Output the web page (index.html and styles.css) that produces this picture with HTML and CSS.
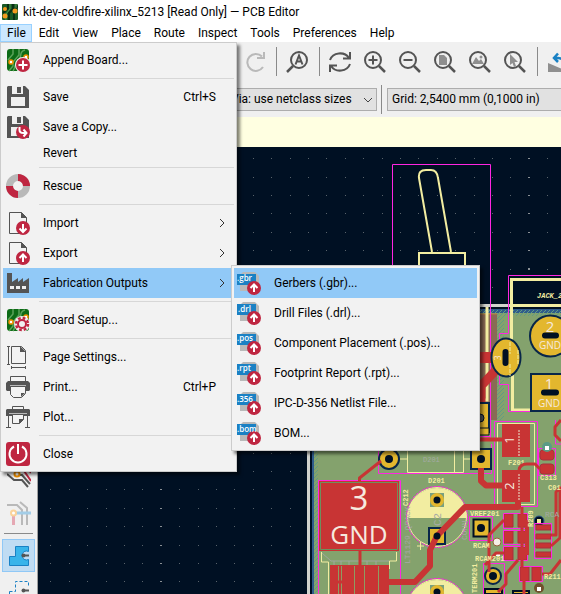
FILE: index.html
```html
<!DOCTYPE html>
<html lang="en">
<head>
<meta charset="utf-8">
<title>kit-dev-coldfire-xilinx_5213 [Read Only] — PCB Editor</title>
<link rel="stylesheet" href="styles.css">
</head>
<body>
<svg class="defs" aria-hidden="true">
  <defs>
    <symbol id="board" viewBox="0 0 24 24">
      <rect x="1" y="1" width="22" height="22" rx="3" fill="#0d6b16"/>
      <path d="M7 1v5L2 12M13 1v6l-6 7v4l-4 5M19 2c-7 2-2 7-7 11-4 3-2 6-5 10" fill="none" stroke="#5ba35b" stroke-width="1.5"/>
      <circle cx="5" cy="14" r="2" fill="#fff" stroke="#f29100" stroke-width="1.5"/>
      <circle cx="20" cy="9" r="2" fill="#fff" stroke="#f29100" stroke-width="1.5"/>
    </symbol>
    <symbol id="floppy" viewBox="0 0 24 24">
      <path d="M2 1h17l4 4v18H1V2z" fill="#545454"/>
      <path d="M6 1h11v8H6z" fill="#f0f0f0"/><path d="M11 2h4v6h-4z" fill="#545454"/><path d="M5 12h14v9H5z" fill="#f0f0f0"/>
    </symbol>
    <symbol id="sheet" viewBox="0 0 24 24">
      <path d="M3.500 1.500h12l5 5v16h-17z" fill="#f3f3f3" stroke="#545454"/><path d="M15 1l6 6h-6z" fill="#545454"/>
    </symbol>
    <symbol id="up" viewBox="0 0 14 14">
      <circle cx="7" cy="7" r="7" fill="#bf2641"/><path d="M7 11V4M3.500 7L7 3.500 10.500 7" fill="none" stroke="#fff" stroke-width="2"/>
    </symbol>
    <symbol id="tab" viewBox="0 0 24 24">
      <path d="M6 1h12l4 4v15H3V4z" fill="#b9b9b9"/><rect y="3" width="19" height="11" fill="#1a81c4"/>
      <use href="#up" x="10" y="10" width="14" height="14"/>
    </symbol>
    <symbol id="lens" viewBox="0 0 22 22">
      <circle cx="9" cy="9" r="8" fill="none" stroke="#545454" stroke-width="2"/><path d="M15 15l6 6" stroke="#545454" stroke-width="2.500"/>
    </symbol>
    <symbol id="chev" viewBox="0 0 6 10"><path d="M1 1l4 4-4 4" fill="none" stroke="#333"/></symbol>
    <g id="dotrow" fill="#59636b"><path d="M0 0h1v1H0zM18 0h1v1h-1zM36 0h1v1h-1zM55 0h1v1h-1zM73 0h1v1h-1z"/></g>
    <pattern id="grid" x="14" y="158" width="92" height="92" patternUnits="userSpaceOnUse">
      <use href="#dotrow"/><use href="#dotrow" y="19"/><use href="#dotrow" y="37"/><use href="#dotrow" y="55"/><use href="#dotrow" y="74"/>
    </pattern>
    <pattern id="hatch" width="4" height="4" patternUnits="userSpaceOnUse"><path d="M0 4l4-4" stroke="#629b82"/></pattern>
  </defs>
</svg>

<div class="app">
  <header class="titlebar">
    <svg class="logo" viewBox="0 0 16 16" aria-hidden="true"><rect width="16" height="16" rx="1" fill="#1b5a26"/><path d="M6 0v4L1 9M11 0v5L7 9v7M16 2l-4 4v10" fill="none" stroke="#0a2f14" stroke-width="2"/><path d="M8 0v5l-4 5v6M14 0v4" fill="none" stroke="#4f9a4d"/><circle cx="3" cy="5" r="2" fill="#f39a1e"/><circle cx="3" cy="12" r="2.500" fill="#f39a1e"/><circle cx="13" cy="7" r="2.500" fill="#f39a1e"/></svg>
    <h1 class="title">kit-dev-coldfire-xilinx_5213 [Read Only] — PCB Editor</h1>
  </header>

  <nav class="menubar">
    <div class="menu-root">
      <button class="menu-title open">File</button>
      <div class="menu" role="menu">
        <button class="item"><svg class="icon" viewBox="0 0 24 24"><use href="#board"/><circle cx="17" cy="17" r="8" fill="#f0f0f0"/><circle cx="17" cy="17" r="7" fill="#bf2641"/><path d="M17 12.500v9M12.500 17h9" stroke="#fff" stroke-width="2"/></svg><span>Append Board...</span></button>
        <hr>
        <button class="item"><svg class="icon"><use href="#floppy"/></svg><span>Save</span><span class="key">Ctrl+S</span></button>
        <button class="item"><svg class="icon" viewBox="0 0 24 24"><use href="#floppy"/><circle cx="17" cy="17" r="7" fill="#bf2641"/><path d="M13.500 12v3q0 3 4 3h3M17.500 14.500l3 3.500-3 3.500" fill="none" stroke="#fff" stroke-width="2"/></svg><span>Save a Copy...</span></button>
        <button class="item plain"><span class="icon"></span><span>Revert</span></button>
        <hr>
        <button class="item"><svg class="icon" viewBox="0 0 24 24"><circle cx="12" cy="12" r="8.500" fill="none" stroke="#b9b9b9" stroke-width="7"/><path d="M12 3.500A8.500 8.500 0 0 1 20.500 12M12 20.500A8.500 8.500 0 0 1 3.500 12" fill="none" stroke="#bf2641" stroke-width="7"/></svg><span>Rescue</span></button>
        <hr>
        <button class="item"><svg class="icon" viewBox="0 0 24 24"><use href="#sheet"/><circle cx="17" cy="17" r="7" fill="#bf2641"/><path d="M17 13v8M13.500 17.500L17 21l3.500-3.500" fill="none" stroke="#fff" stroke-width="2"/></svg><span>Import</span><svg class="arrow"><use href="#chev"/></svg></button>
        <button class="item"><svg class="icon" viewBox="0 0 24 24"><use href="#sheet"/><use href="#up" x="10" y="10" width="14" height="14"/></svg><span>Export</span><svg class="arrow"><use href="#chev"/></svg></button>
        <div class="sub-root">
          <button class="item active"><svg class="icon" viewBox="0 0 24 24"><path d="M1 2h5v9l6-4v4l5-4v4l6-4v15H1z" fill="#545454"/><path d="M4 15h4v3H4zM10 15h4v3h-4zM16 15h4v3h-4z" fill="#f0f0f0"/></svg><span>Fabrication Outputs</span><svg class="arrow"><use href="#chev"/></svg></button>
          <div class="menu submenu" role="menu">
            <button class="item active"><svg class="icon" viewBox="0 0 24 24"><use href="#tab"/><text class="ext" x="0" y="10">.gbr</text></svg><span>Gerbers (.gbr)...</span></button>
            <button class="item"><svg class="icon" viewBox="0 0 24 24"><use href="#tab"/><text class="ext" x="1" y="11">.drl</text></svg><span>Drill Files (.drl)...</span></button>
            <button class="item"><svg class="icon" viewBox="0 0 24 24"><use href="#tab"/><text class="ext" x="0" y="10">.pos</text></svg><span>Component Placement (.pos)...</span></button>
            <button class="item"><svg class="icon" viewBox="0 0 24 24"><use href="#tab"/><text class="ext" x="0" y="10">.rpt</text></svg><span>Footprint Report (.rpt)...</span></button>
            <button class="item"><svg class="icon" viewBox="0 0 24 24"><use href="#tab"/><text class="ext" x="0" y="11">.356</text></svg><span>IPC-D-356 Netlist File...</span></button>
            <button class="item"><svg class="icon" viewBox="0 0 24 24"><use href="#tab"/><text class="ext" x="0" y="11">.bom</text></svg><span>BOM...</span></button>
          </div>
        </div>
        <hr>
        <button class="item"><svg class="icon" viewBox="0 0 24 24"><use href="#board"/><circle cx="16" cy="16" r="8" fill="#f0f0f0"/><circle cx="16" cy="16" r="6" fill="none" stroke="#bf2641" stroke-width="2.500" stroke-dasharray="2.700 2"/><circle cx="16" cy="16" r="4" fill="none" stroke="#bf2641" stroke-width="2"/></svg><span>Board Setup...</span></button>
        <hr>
        <button class="item"><svg class="icon" viewBox="0 0 24 24"><path d="M5.500 1.500h10l4 4v13h-14zM1 1.500h3M2.500 1v18M1 19.500h3M5 22.500h15M5.500 21v3M19.500 21v3" fill="none" stroke="#545454"/><path d="M14 1l6 6h-6z" fill="#545454"/></svg><span>Page Settings...</span></button>
        <button class="item"><svg class="icon" viewBox="0 0 24 24"><path d="M4.500 1.500h15v6h-15z" fill="#f3f3f3" stroke="#545454"/><path d="M2 6h20l2 2v7l-1 1H1l-1-1V8z" fill="#545454"/><path d="M4 10.500h16" stroke="#b9b9b9"/><path d="M4.500 11.500h15v7l-4 4h-8l-3-3z" fill="#f3f3f3" stroke="#545454"/><path d="M15 22v-4h4z" fill="#545454"/></svg><span>Print...</span><span class="key">Ctrl+P</span></button>
        <button class="item"><svg class="icon" viewBox="0 0 24 24"><path d="M6.500 1.500h11v5h-11z" fill="#f3f3f3" stroke="#545454"/><path d="M1 4h22l1 1v6H0V5z" fill="#545454"/><path d="M3 8.500h18" stroke="#b9b9b9"/><path d="M2.500 10v12M21.500 10v12M0 22.500h5M19 22.500h5" stroke="#545454"/><path d="M6.500 9.500h11v5l-4 4h-7z" fill="#f3f3f3" stroke="#545454"/><path d="M13 19v-5h5z" fill="#545454"/></svg><span>Plot...</span></button>
        <hr>
        <button class="item"><svg class="icon" viewBox="0 0 24 24"><rect width="24" height="24" rx="3" fill="#bf2641"/><path d="M8 4.500a8.500 8.500 0 1 0 8 0M12 2v10" fill="none" stroke="#fff" stroke-width="2"/></svg><span>Close</span></button>
      </div>
    </div>
    <button class="menu-title">Edit</button>
    <button class="menu-title">View</button>
    <button class="menu-title">Place</button>
    <button class="menu-title">Route</button>
    <button class="menu-title">Inspect</button>
    <button class="menu-title">Tools</button>
    <button class="menu-title">Preferences</button>
    <button class="menu-title">Help</button>
  </nav>

  <div class="toolbar" role="toolbar">
    <button class="tool" aria-label="Redo"><svg viewBox="0 0 22 22"><path d="M19 5.500A8.500 8.500 0 1 0 20 16M21 1v6h-7" fill="none" stroke="#b9b9b9" stroke-width="2"/></svg></button>
    <span class="sep"></span>
    <button class="tool" aria-label="Find"><svg viewBox="0 0 22 22"><circle cx="13" cy="9" r="8" fill="none" stroke="#545454" stroke-width="2"/><path d="M7 15l-6 6" stroke="#545454" stroke-width="2.500"/><path d="M9.500 13.500l3.500-9 3.500 9M10.500 10.500h5" fill="none" stroke="#545454" stroke-width="2"/></svg></button>
    <span class="sep"></span>
    <button class="tool" aria-label="Refresh"><svg viewBox="0 0 22 22"><path d="M1 9a10.500 9.500 0 0 1 19-2M21 1v6.500h-7M21 13a10.500 9.500 0 0 1-19 2M1 21v-6.500h7" fill="none" stroke="#545454" stroke-width="2"/></svg></button>
    <button class="tool" aria-label="Zoom in"><svg viewBox="0 0 22 22"><use href="#lens"/><path d="M9 4.500v9M4.500 9h9" stroke="#545454" stroke-width="2"/></svg></button>
    <button class="tool" aria-label="Zoom out"><svg viewBox="0 0 22 22"><use href="#lens"/><path d="M4.500 9h9" stroke="#545454" stroke-width="2"/></svg></button>
    <button class="tool" aria-label="Zoom to page"><svg viewBox="0 0 22 22"><use href="#lens"/><path d="M5 4h5l3 3v7H5z" fill="#8f8f8f"/></svg></button>
    <button class="tool" aria-label="Zoom to objects"><svg viewBox="0 0 22 22"><use href="#lens"/><path d="M3 13l4-7 3 4 2-2 3 5z" fill="#8f8f8f"/><circle cx="12" cy="6" r="1.500" fill="#8f8f8f"/></svg></button>
    <button class="tool" aria-label="Zoom to selection"><svg viewBox="0 0 22 22"><use href="#lens"/><path d="M6 3v11l2.500-2 1.500 4 2-1-1.500-4H14z" fill="#8f8f8f"/></svg></button>
    <span class="sep"></span>
    <button class="tool" aria-label="Rotate"><svg viewBox="0 0 22 22"><path d="M1 12v9h21z" fill="#8f8f8f"/><path d="M7 7h4q6 0 7 7M11 2.500L7 7l4 4" fill="none" stroke="#1a81c4" stroke-width="2.500"/></svg></button>
  </div>

  <div class="options">
    <label class="combo via"><select aria-label="Via size"><option>Via: use netclass sizes</option></select><svg class="down" viewBox="0 0 10 6" aria-hidden="true"><path d="M1 1l4 4 4-4" fill="none" stroke="#444"/></svg></label>
    <span class="sep"></span>
    <label class="combo grid"><select aria-label="Grid"><option>Grid: 2,5400 mm (0,1000 in)</option></select></label>
  </div>

  <div class="infobar"></div>

  <main class="work">
    <aside class="side">
      <button class="side-tool" aria-label="Route differential pair"><svg viewBox="0 0 24 24"><path d="M0 8l7 6h8l6 7" fill="none" stroke="#545454" stroke-width="2"/><path d="M0 2h6l5 5M15 2l9 13M19 0l5 7" fill="none" stroke="#bf2641" stroke-width="2"/><path d="M11 9h4l8 9" fill="none" stroke="#545454" stroke-width="2"/><circle cx="10" cy="8" r="2.500" fill="#fff" stroke="#f29100" stroke-width="2"/></svg></button>
      <button class="side-tool" aria-label="Tracks"><svg viewBox="0 0 24 24"><path d="M0 4h10l5 5v15M13 1l7 6v17" fill="none" stroke="#b9b9b9" stroke-width="2"/><path d="M7 12h17" stroke="#a3cde7" stroke-width="3"/><path d="M6.500 14v10" stroke="#e5a8b3" stroke-width="3"/><circle cx="6.500" cy="12" r="2.500" fill="#fff" stroke="#fad39a" stroke-width="2"/></svg></button>
      <span class="rule"></span>
      <button class="side-tool on" aria-label="Filled zones"><svg viewBox="0 0 24 24"><path d="M2.500 12.500h6v-10h13v5a4.500 4.500 0 1 0 0 8v6h-19z" fill="#39b4ea" stroke="#1a81c4"/><circle cx="16.500" cy="11.500" r="2" fill="#545454"/><path d="M16 11.500h6" stroke="#545454" stroke-width="2"/></svg></button>
      <button class="side-tool" aria-label="Outlined zones"><svg viewBox="0 0 24 24"><path d="M2.500 12.500h6v-10h13v6M2.500 12.500v9h19v-6" fill="none" stroke="#1a81c4" stroke-dasharray="3 2"/><circle cx="16.500" cy="11.500" r="2" fill="#545454"/><path d="M16 11.500h6" stroke="#545454" stroke-width="2"/></svg></button>
    </aside>
    <svg class="canvas" viewBox="38 147 523 447" preserveAspectRatio="xMinYMin slice">
      <rect x="38" y="147" width="523" height="447" fill="#001023"/>
      <rect x="38" y="147" width="523" height="447" fill="url(#grid)"/>
      <path d="M160 489h2v1h-2zM160 508h2v1h-2zM160 526h2v1h-2zM160 545h2v1h-2zM160 563h2v1h-2zM160 581h2v1h-2zM528 158h2v1h-2zM528 177h2v1h-2zM528 195h2v1h-2zM528 213h2v1h-2zM528 232h2v1h-2zM528 250h2v1h-2zM528 268h2v2h-2z" fill="#8a9095"/>

      <!-- board outline and copper pours -->
      <path d="M307 304h254v3H310v287h-3z" fill="#d0d2cd"/>
      <path d="M312 309h249v285H312z" fill="#2f5b8b"/>
      <path d="M314 313h247v281H314z" fill="#84a26d"/>
      <path d="M314 313h4v281h-4zM480 310h81v6h-81zM497 310h7v110h-7z" fill="url(#hatch)"/>
      <path d="M480 314h17v106h-17z" fill="#8a6a55"/>
      <path d="M480 314h17" stroke="#c07a3a"/>

      <!-- switch lever -->
      <g fill="none" stroke="#f2eda1" stroke-width="2">
        <path d="M432 252L419 178q-1-8 7-8h5q6 0 7 8l13 74M419 268v-15h46v15"/>
        <path d="M487 307v93h-7" stroke-width="3"/>
      </g>
      <path d="M392.500 268V164.500h98V440" fill="none" stroke="#ff26e2"/>

      <!-- jack -->
      <path d="M508 276h53v28h-53z" fill="#001023"/>
      <path d="M511.500 340V279.500H561M511 305.500h50M512.500 375v35H531" fill="none" stroke="#f2eda1" stroke-width="3"/>
      <path d="M561 275.500h-52.500v58h-9v51h9v27H531" fill="none" stroke="#ff26e2"/>
      <text class="silk" x="537" y="298" font-size="7" font-style="italic">JACK_2P</text>
      <g fill="none" stroke="#c83434">
        <path d="M480 357.500h14" stroke-width="11"/><path d="M497 369l-16 17v18" stroke-width="9"/>
      </g>
      <g fill="#e3b72e" stroke="#082649" stroke-width="2">
        <ellipse cx="506" cy="357.500" rx="14.500" ry="19"/><circle cx="550.500" cy="336" r="20.500"/><path d="M531 374h31v37h-31zM472 403h17v29h-17z"/>
      </g>
      <g stroke="#001023" stroke-width="6" stroke-linecap="round"><path d="M505.500 352v11M545 335.500h11M544 392.500h12"/></g>
      <g class="pad"><text x="550" y="332" font-size="15">2</text><text x="550" y="349" font-size="10">GND</text><text x="549" y="389" font-size="15">1</text><text x="549" y="407" font-size="10">GND</text></g>
      <text class="pad" font-size="9" transform="translate(501 358) rotate(-90)">3</text>
      <path d="M510 342v12M510 364v12M518 350v14" stroke="#f2eda1" stroke-dasharray="4 1"/>
      <circle cx="480" cy="418" r="4" fill="#54595e" stroke="#001023"/>

      <!-- fuse F201 -->
      <path d="M497.500 423.500h37v81h-37z" fill="none" stroke="#f2eda1"/>
      <path d="M494.500 421.500h43v85h-43zM478 436.500h13" fill="none" stroke="#ff26e2"/>
      <path d="M502 424h28v33h-28zM502 470h28v32h-28z" fill="#c83434"/>
      <path d="M480 439.500h24" stroke="#c83434" stroke-width="4"/>
      <path d="M519 430v26M519 474v26" stroke="#da8f83" stroke-width="2" stroke-dasharray="2 1"/>
      <g class="pad"><text font-size="13" transform="translate(514 440) rotate(-90)">1</text><text font-size="13" transform="translate(514 486) rotate(-90)">2</text></g>
      <text class="silk" x="508" y="465" font-size="7">F201</text>
      <path d="M472 428h17v7h-17z" fill="#e3b72e" stroke="#001023"/>

      <!-- diode D201 -->
      <path d="M400 459h7M463 459h9M407.500 451v21.500h56V451M454.500 451v21" fill="none" stroke="#f2eda1"/>
      <path d="M378.500 446v27.500h113V444" fill="none" stroke="#ff26e2"/>
      <circle cx="389" cy="459" r="10" fill="#e3b72e" stroke="#082649" stroke-width="2"/>
      <path d="M471 449h20v20h-20z" fill="#e3b72e" stroke="#082649" stroke-width="2"/>
      <circle cx="389" cy="459" r="4" fill="#001023"/><circle cx="481" cy="459" r="4" fill="#001023"/>
      <text class="fab" x="423" y="462" font-size="7">D201</text>
      <text class="silk" x="428" y="483" font-size="7">D201</text>

      <!-- connector pad 3 -->
      <path d="M319 481h80v70h-80z" fill="#c83434"/>
      <path d="M320.500 482.500h77v67h-77z" fill="none" stroke="#6e8f5e"/>
      <path d="M318.500 594V480.500h82V594" fill="none" stroke="#ff26e2"/>
      <path d="M321.500 552v10l7 0v32M396.500 552v9h-7v8" fill="none" stroke="#f2eda1"/>
      <path d="M322 553l9 8h58M334 561v4M341 561v4M349 561v4M367 561v4M376 561v4" fill="none" stroke="#a0a79e"/>
      <path d="M330 565h59v29h-59z" fill="#c83434"/>
      <path d="M338.500 566v28M341.500 566v28M354.500 566v28M364.500 566v28M378.500 566v28" stroke="#8e9b61"/>
      <path d="M336 582h10" stroke="#c83434" stroke-width="3"/>
      <g class="pad"><text x="359" y="510" font-size="33">3</text><text x="359" y="544" font-size="26">GND</text></g>

      <!-- capacitors -->
      <g id="cap">
        <circle cx="437" cy="517" r="29.500" fill="none" stroke="#f2eda1"/>
        <path d="M407 518a30 30 0 0 1 60 0z" fill="#f2eda1"/>
        <circle cx="437" cy="517" r="30.500" fill="none" stroke="#ff26e2" stroke-dasharray="3 1"/>
        <path d="M430 493h14v14h-14z" fill="#78a080"/><circle cx="437" cy="500" r="7" fill="#e3b72e"/><circle cx="437" cy="500" r="3.500" fill="#001023"/>
        <path d="M429 528h16v16h-16z" fill="#e3b72e" stroke="#082649" stroke-width="2"/>
      </g>
      <use href="#cap" y="92"/>
      <path d="M417 546h7M420.500 542v8" stroke="#f2eda1"/>
      <text class="silk" font-size="7" transform="translate(408 506) rotate(-90)">C212</text>
      <text class="fab" font-size="8" transform="translate(410 564) rotate(-90)">LT1129_QPACK</text>
      <text class="fab" font-size="11" transform="translate(441 526) rotate(-90)">C2</text>
      <text class="fab" font-size="8" transform="translate(467 540) rotate(-90)">CONN</text>

      <!-- reference post and header -->
      <path d="M469.500 516.500h23v24h-23zM483.500 563.500h21V594M483.500 563v31" fill="none" stroke="#ff26e2"/>
      <path d="M473.500 519.500h16v17h-16z" fill="#e3b72e" stroke="#001023" stroke-width="2"/>
      <circle cx="493" cy="576" r="8" fill="#e3b72e" stroke="#082649" stroke-width="2"/>
      <path d="M485 589h17v5h-17zM513 591h16v3h-16z" fill="#e3b72e" stroke="#001023" stroke-width="2"/>
      <g fill="#001023"><circle cx="481" cy="528" r="4"/><circle cx="493" cy="576" r="4"/><circle cx="539" cy="521" r="5" stroke="#2f5b8b"/></g>
      <path d="M537 519h4v4h-4z" fill="#f2eda1"/>
      <circle cx="539" cy="588" r="5" fill="#71502c"/><path d="M537 587h4v4h-4z" fill="#fff"/>

      <!-- small passives -->
      <g fill="#c83434" stroke="#a92f3c">
        <path d="M504 514h9v13h-9zM518 514h9v13h-9zM504 531h9v12h-9zM518 531h9v12h-9zM504 547h9v13h-9zM518 547h9v13h-9zM520 567h9v14h-9zM532 567h9v14h-9z"/>
        <rect x="540" y="450" width="14" height="10" rx="3"/><rect x="540" y="464" width="14" height="10" rx="3"/>
        <path d="M536 525h15v5h-15zM536 534h15v5h-15zM536 543h15v5h-15zM536 552h15v5h-15z"/>
      </g>
      <path d="M503.500 513.500h24v15h-24zM503.500 530.500h24v14h-24zM503.500 546.500h24v14h-24zM519.500 566.500h23v15h-23zM538.500 448.500h17v27h-17zM555.500 420v24h6M534.500 523.500h17v35h-17z" fill="none" stroke="#ff26e2"/>
      <circle cx="547" cy="447" r="5" fill="#5b9b87"/><path d="M545 446h4v4h-4zM495 541h4v4h-4zM496 552h4v4h-4z" fill="#fff"/>

      <!-- tracks -->
      <g fill="none" stroke="#c83434" stroke-linejoin="round">
        <path d="M381 461l-21.500 17v4M360 551v18" stroke-width="3"/>
        <path d="M481 468v13l5 4.500h18M518 500v7h-53l-28 29-7 14v16l-15 16h-26" stroke-width="6"/>
        <path d="M504 520l-15 15v37M504 553h-8l-11 12M518 560l-12 14v10l-8 8M524 580v14M522 507v60M519 470q1-6 8-6h8l5 5M551 546l9-8v-48M551 535h5v-43l5-5M542 574h8l11-14M561 420l-6 7v8l6 6" stroke-width="3"/>
        <path d="M527 520v35" stroke-width="4"/>
      </g>
      <circle cx="437" cy="536" r="3.500" fill="#001023"/>
      <circle cx="497" cy="542" r="4" fill="#f4efe6" stroke="#96603a"/>
      <text class="silk" x="470" y="516" font-size="7">VREF201</text>
      <text class="silk" x="473" y="548" font-size="7">RCAM</text>
      <text class="silk" x="475" y="561" font-size="7">RCAM201</text>
      <text class="silk" x="540" y="480" font-size="7">C313</text>
      <text class="silk" x="548" y="490" font-size="7">C01</text>
      <text class="silk" x="544" y="579" font-size="7">R211</text>
      <text class="fab" x="545" y="517" font-size="8">RCA</text>
      <text class="silk" font-size="7" transform="translate(533 527) rotate(-90)">R209</text>
      <text class="silk" font-size="7" transform="translate(477 593) rotate(-90)">TERM201</text>
    </svg>
  </main>
</div>
</body>
</html>
```
FILE: styles.css
```css
* { box-sizing: border-box; }

body {
  margin: 0;
  background: #f0f0f0;
  color: #000;
  font-family: Roboto, "Open Sans", sans-serif;
  font-size: 12px;
  line-height: 16px;
}

button, select { font: inherit; color: inherit; }
button { border: 0; padding: 0; background: none; }
.defs { position: absolute; width: 0; height: 0; }

.app { display: flex; flex-direction: column; height: 100vh; overflow: hidden; }

.titlebar { display: flex; align-items: center; gap: 5px; height: 24px; padding-left: 2px; background: #fff; flex: none; }
.logo { width: 16px; height: 16px; }
.title { margin: 0; font-size: 12px; font-weight: 400; white-space: nowrap; }

.menubar { display: flex; height: 18px; background: #fff; flex: none; }
.menu-root { position: relative; z-index: 2; }
.menu-title { display: block; height: 18px; padding: 0 6px 0 7px; line-height: 18px; white-space: nowrap; }
.menu-title.open { background: #cce8ff; box-shadow: inset 0 0 0 1px #99d1ff; }

.menu {
  position: absolute;
  top: 18px;
  left: 0;
  width: 237px;
  padding: 2px;
  border: 1px solid #ccc;
  background: #f2f2f2;
  box-shadow: 3px 3px 3px rgba(0, 0, 0, .5);
}
.menu hr { height: 1px; margin: 3px 0 3px 36px; border: 0; background: #d7d7d7; }
.item {
  display: flex;
  align-items: center;
  width: 100%;
  height: 30px;
  padding: 0 9px 0 3px;
  text-align: left;
  white-space: nowrap;
}
.item.plain { height: 22px; }
.item.active { background: #91c9f7; }
.icon { width: 24px; height: 24px; margin-right: 13px; flex: none; }
.plain .icon { height: 0; }
.key { margin-left: auto; padding-right: 9px; }
.arrow { width: 6px; height: 10px; margin-left: auto; }
.sub-root { position: relative; }
.submenu { top: -3px; left: 228px; width: 249px; }
.ext { font: 600 8px "Open Sans", sans-serif; fill: #fff; }

.toolbar { display: flex; align-items: center; gap: 9px; height: 39px; padding-left: 241px; overflow: hidden; flex: none; }
.tool { display: flex; justify-content: center; width: 26px; height: 26px; align-items: center; flex: none; }
.tool svg { width: 22px; height: 22px; }
.sep { width: 1px; height: 29px; background: #8a8a8a; flex: none; }
.toolbar .sep { margin-right: -2px; }

.options { display: flex; align-items: center; gap: 4px; height: 36px; padding-left: 226px; flex: none; }
.combo { position: relative; }
.combo select {
  display: block;
  width: 100%;
  height: 23px;
  padding: 0 4px;
  border: 1px solid #adadad;
  border-radius: 0;
  background: #e1e1e1;
  appearance: none;
}
.via { width: 151px; }
.grid { flex: 1; padding-left: 1px; }
.grid select { border-right: 0; }
.down { position: absolute; top: 9px; right: 4px; width: 10px; height: 6px; }

.infobar { height: 30px; background: #ffffe1; flex: none; }

.work { display: flex; flex: 1; min-height: 0; }
.side {
  display: flex;
  flex-direction: column;
  gap: 2px;
  width: 38px;
  padding: 314px 2px 0;
  border-right: 1px solid #a0a0a0;
  overflow: hidden;
  flex: none;
}
.side-tool { display: flex; align-items: center; justify-content: center; width: 33px; height: 33px; flex: none; }
.side-tool.on { background: #c0dcf3; box-shadow: inset 0 0 0 1px #90c8f6; }
.side-tool svg { width: 24px; height: 24px; }
.rule { height: 1px; margin: 2px 2px 3px; background: #8a8a8a; flex: none; }
.canvas { flex: 1; min-width: 0; height: 100%; }

.silk { fill: #f2eda1; font-family: "Liberation Mono", monospace; font-weight: 700; }
.fab { fill: #a5aaa5; font-family: "Liberation Mono", monospace; }
.pad { fill: #f6e9df; font-family: "Open Sans", sans-serif; text-anchor: middle; }
```
